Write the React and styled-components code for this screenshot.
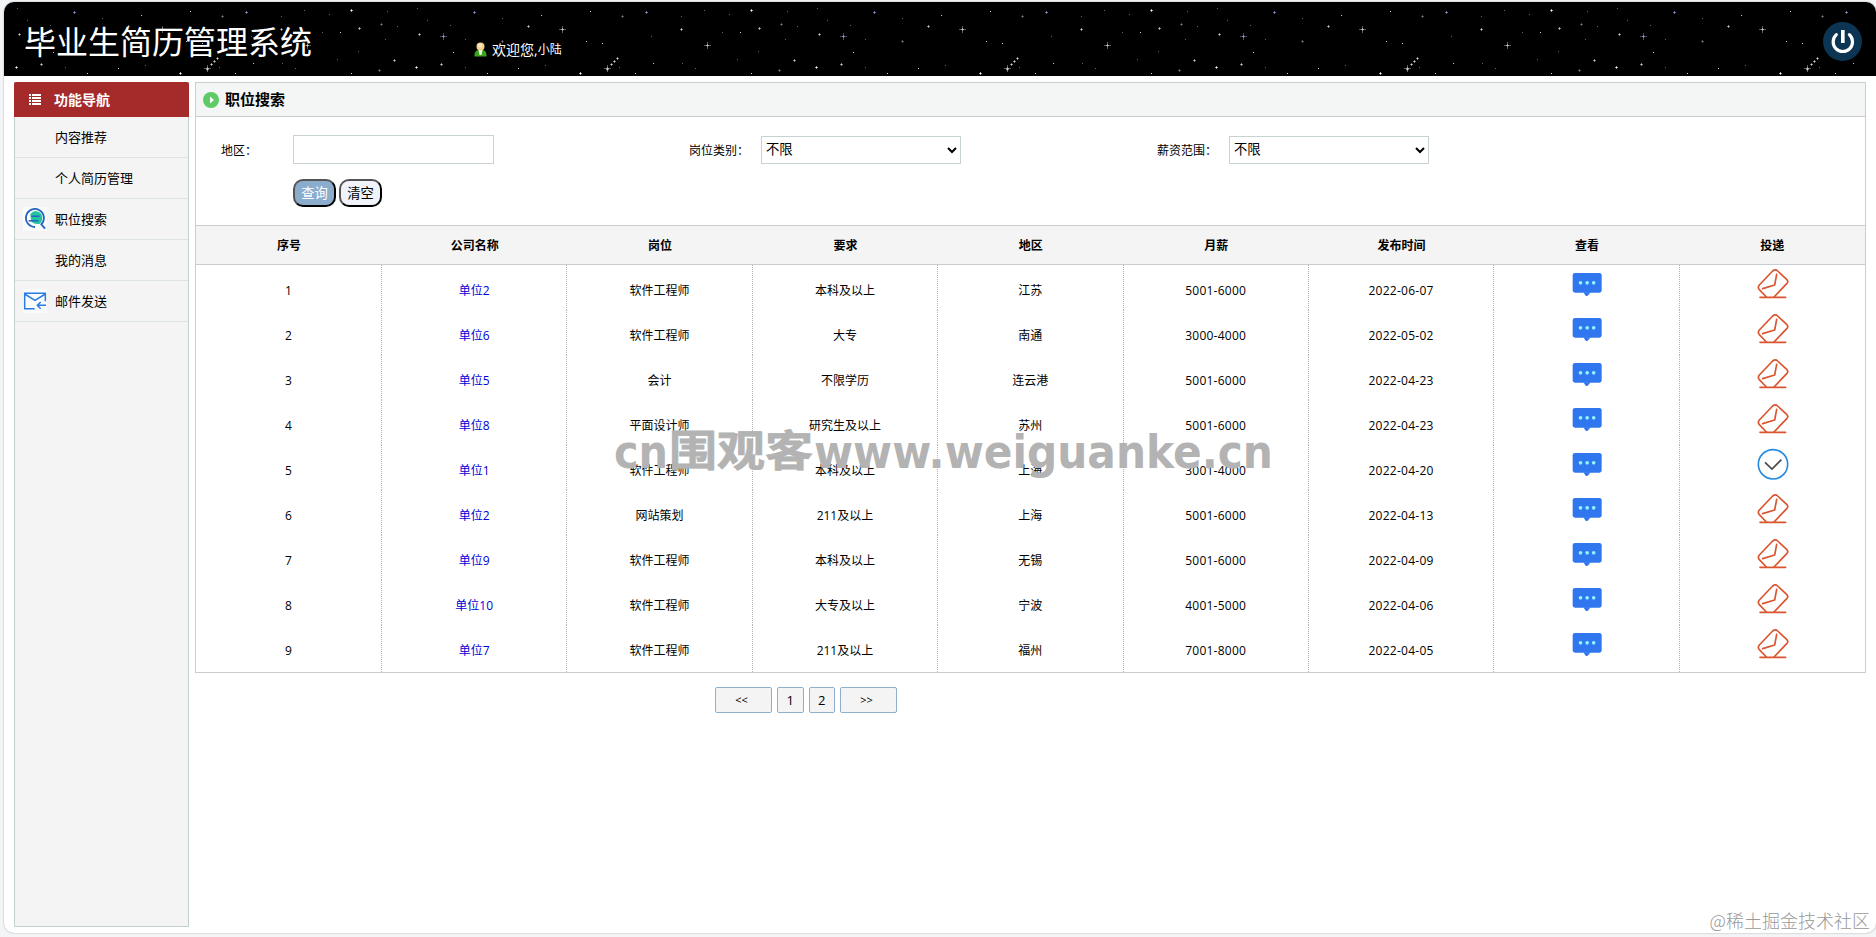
import React from 'react';
import styled, { createGlobalStyle, css } from 'styled-components';

const GlobalStyle = createGlobalStyle`
  * {
    box-sizing: border-box;
  }

  body {
    margin: 0;
    background: #f4f5f6;
    color: #000;
    font: 12px 'Open Sans', 'Noto Sans CJK SC', sans-serif;
    overflow: hidden;
  }
`;

const Page = styled.div`
  position: relative;
  width: 1876px;
  height: 937px;
  padding: 2px 0 0 4px;
  overflow: hidden;
`;

const Frame = styled.div`
  height: 931px;
  background: #fff;
  border-radius: 10px;
  box-shadow: 0 0 2px rgba(0, 0, 0, 0.35);
  overflow: hidden;
`;

const Header = styled.header`
  position: relative;
  display: flex;
  height: 74px;
  background: #000;
  color: #fff;
`;

const Sky = styled.svg`
  position: absolute;
  inset: 0;
  width: 100%;
  height: 100%;
`;

const SiteTitle = styled.h1`
  position: relative;
  width: 450px;
  margin: 0;
  padding: 17px 0 0 20px;
  font-size: 32px;
  line-height: 46px;
  font-weight: 400;
`;

const Welcome = styled.div`
  position: relative;
  display: flex;
  flex: 1;
  height: 24px;
  margin: 36px 0 0 20px;
  font-size: 14px;
  line-height: 24px;

  svg {
    margin: 4px 5px 0 0;
  }

  small {
    font-size: 12px;
  }
`;

const PowerButton = styled.a`
  position: relative;
  display: block;
  width: 39px;
  height: 39px;
  margin: 20px 14px 0 0;
`;

const Content = styled.div`
  display: flex;
  gap: 6px;
  padding: 6px 10px 0;
`;

const Sidebar = styled.aside`
  width: 175px;
  height: 845px;
  background: #f4f4f4;
  border: 1px solid #c2d0cf;
  border-top: 0;
`;

const SidebarTitle = styled.h2`
  display: flex;
  align-items: center;
  height: 35px;
  margin: 0 -1px;
  padding: 0 0 1px 15px;
  background: #a52a2a;
  border-radius: 2px 2px 0 0;
  color: #fff;
  font-size: 14px;
  gap: 13px;

  svg {
    margin-top: 2px;
  }
`;

const SidebarItem = styled.a`
  display: flex;
  align-items: center;
  height: 41px;
  padding: 0 0 2px 8px;
  border-bottom: 1px solid #dbe3e5;
  font-size: 13px;
`;

const ItemIcon = styled.span`
  width: 24px;
  height: 24px;
  margin: 2px 8px 0 0;
  background: ${(props) => (props.$filled ? '#f9fbfd' : 'none')};
`;

const Main = styled.main`
  flex: 1;
`;

const Panel = styled.section`
  border: 1px solid #c7cdd1;
`;

const PanelTitle = styled.h2`
  display: flex;
  align-items: center;
  height: 33px;
  margin: 0;
  padding: 0 0 2px 7px;
  gap: 6px;
  background: #f4f5f5;
  font-size: 15px;

  svg {
    margin-top: 3px;
  }
`;

const SearchForm = styled.form`
  height: 110px;
  padding: 18px 0 0 25px;
  border: solid #c7cdd1;
  border-width: 1px 0;
`;

const Fields = styled.div`
  display: grid;
  grid-template-columns: repeat(3, 468px);
  height: 29px;
`;

const Field = styled.label`
  display: flex;
  align-items: center;

  span {
    width: 72px;
  }
`;

const control = css`
  border: 1px solid #c8d2d3;
  background: #fff;
  color: #000;
  font: 13.33px 'Open Sans', 'Noto Sans CJK SC', sans-serif;
  outline: 0;
`;

const TextInput = styled.input`
  ${control}
  width: 201px;
  height: 29px;
`;

const Select = styled.select`
  ${control}
  width: 200px;
  height: 28px;
  margin-top: 1px;
  padding-bottom: 3px;
`;

const Buttons = styled.div`
  display: flex;
  gap: 3px;
  margin: 15px 0 0 72px;
`;

const FormButton = styled.button`
  width: 43px;
  height: 28px;
  padding: 0 0 1px;
  border: 2px outset #000;
  border-radius: 10px;
  background: ${(props) => (props.$primary ? '#8aadce' : '#f0f4fa')};
  color: ${(props) => (props.$primary ? '#fff' : '#000')};
  font: 13.33px 'Open Sans', 'Noto Sans CJK SC', sans-serif;
`;

const Row = styled.div`
  display: grid;
  grid-template-columns: 186px repeat(8, 1fr);
  height: 45px;
  text-align: center;

  &:last-child {
    height: 47px;
  }
`;

const HeadRow = styled(Row)`
  height: 39px;
  background: #f4f4f4;
  border-bottom: 1px solid #c7cdd1;
  font-weight: 700;
  line-height: 39px;
`;

const Cell = styled.div`
  padding: ${(props) => (props.$icon ? '3px 0 0 1px' : '16px 0 0')};
  line-height: 20px;
  letter-spacing: ${(props) => (props.$number ? '0.25px' : 'normal')};

  &:not(:last-child) {
    border-right: 1px dotted #b5b5b5;
  }
`;

const CompanyLink = styled.a`
  color: #0000d6;
`;

const Pager = styled.nav`
  display: flex;
  gap: 5px;
  margin: 14px 0 0 520px;
`;

const PageButton = styled.a`
  width: ${(props) => (props.$wide ? 57 : 26.500)}px;
  height: 26px;
  padding-right: ${(props) => (props.$wide ? 4 : 0)}px;
  border: 1px solid #8eb0cf;
  border-radius: 2px;
  background: #f4f4f4;
  text-align: center;
  line-height: 24px;
  font-size: ${(props) => (props.$wide ? 11 : 13)}px;
`;

const CenterMark = styled.svg`
  position: absolute;
  left: 600px;
  top: 420px;
  pointer-events: none;
`;

const CornerMark = styled.div`
  position: absolute;
  right: 6px;
  bottom: 4px;
  color: #999;
  font: 300 18px/26px 'Noto Sans CJK SC', sans-serif;
  text-shadow: 0 0 1px #fff;
`;

// x, y, size, colour; one tile is 400px wide
const STARS = [
  [17, 8, 0], [27, 20, 0], [50, 25, 0], [74, 12, 2, 'p'], [102, 18, 0], [141, 15, 1],
  [128, 26, 2], [162, 29, 3], [190, 11, 1], [222, 16, 2, 'g'], [246, 12, 2, 'p'], [281, 16, 0],
  [281, 29, 2], [304, 10, 0], [329, 14, 0], [351, 10, 2, 'w'], [387, 11, 0], [19, 34, 2],
  [43, 36, 3, 'p'], [65, 39, 0], [53, 52, 1], [16, 67, 2, 'w'], [41, 64, 2], [65, 67, 0],
  [87, 73, 1], [118, 68, 1], [145, 65, 0], [180, 73, 2, 'w'], [186, 41, 1], [202, 43, 1],
  [251, 36, 0], [307, 45, 3], [322, 32, 0], [340, 32, 1], [359, 28, 2], [381, 24, 2, 'g'],
  [397, 26, 0], [385, 39, 0], [358, 51, 0], [337, 59, 0], [394, 60, 2], [379, 70, 2, 'g'],
  [351, 73, 1], [295, 68, 0], [282, 63, 0], [253, 63, 1], [235, 73, 1], [219, 67, 0],
  [102, 41, 2, 'g'], [207, 68, 3], [207, 69, 2], [211, 64, 2], [214, 61, 2], [217, 58, 2],
];

const STAR_COLORS = { p: '#9d9be0', g: '#777', w: '#fff' };

const Star = ({ x, y, size, tone }) => {
  const color = STAR_COLORS[tone] || (size === 0 ? '#666' : '#ccc');
  return (
    <g fill={color}>
      <rect x={x} y={y - 2} width="1" height="1" />
      {size > 1 && (
        <g opacity="0.6">
          <rect x={x - 1} y={y - 2} width="3" height="1" />
          <rect x={x} y={y - 3} width="1" height="3" />
        </g>
      )}
      {size > 2 && (
        <g opacity="0.45">
          <rect x={x - 3} y={y - 2} width="7" height="1" />
          <rect x={x} y={y - 5} width="1" height="7" />
        </g>
      )}
    </g>
  );
};

const NightSky = () => (
  <Sky>
    <defs>
      <pattern id="stars" x="-4" y="0" width="400" height="80" patternUnits="userSpaceOnUse">
        {STARS.map(([x, y, size, tone]) => (
          <Star key={`${x}-${y}`} x={x} y={y} size={size} tone={tone} />
        ))}
      </pattern>
    </defs>
    <rect width="100%" height="100%" fill="url(#stars)" />
  </Sky>
);

const UserIcon = () => (
  <svg width="13" height="15" viewBox="0 0 13 15">
    <path d="M.5 14.5Q0 9 4 8h5q4 1 3.500 6.500z" fill="#38a51c" />
    <path d="M4.500 8h4L7.500 13h-2z" fill="#e9f7df" />
    <circle cx="6.500" cy="4.500" r="4" fill="#f6cf8e" />
    <circle cx="6" cy="3.500" r="2" fill="#fdebc8" />
  </svg>
);

const PowerIcon = () => (
  <svg width="39" height="39" viewBox="0 0 117 117">
    <circle cx="58.500" cy="58.500" r="58.500" fill="#0b3553" />
    <path d="M40 38a29 29 0 1 0 39 0" fill="none" stroke="#fff" strokeWidth="9.500" strokeLinecap="round" />
    <path d="M54 24h11v39h-11z" fill="#fff" />
  </svg>
);

const ListIcon = () => (
  <svg width="12" height="12" viewBox="0 0 12 12" fill="#fff">
    {[0, 3, 6, 9].map((y) => (
      <React.Fragment key={y}>
        <rect x="0" y={y} width="2" height="2" />
        <rect x="3" y={y} width="9" height="2" />
      </React.Fragment>
    ))}
  </svg>
);

const PlayIcon = () => (
  <svg width="16" height="16" viewBox="0 0 16 16">
    <circle cx="8" cy="8" r="8" fill="#5fcb65" />
    <path d="M7 4.500 11 8l-4 3.500z" fill="#fff" />
  </svg>
);

const SearchIcon = () => (
  <svg width="24" height="24" viewBox="0 0 72 72" fill="none" stroke="#2463c0" strokeWidth="5.500">
    <path d="M22 22Q27 13 37 12q20 2 21 20 0 12-7 18-16 3-26-6z" fill="#23c3a0" stroke="none" />
    <path d="M36 60a27 27 0 1 1 19-8L66 65" />
    <path d="M25 28h25M17 41h29" strokeWidth="4.500" />
  </svg>
);

const MailIcon = () => (
  <svg width="24" height="24" viewBox="0 0 72 72" fill="none" stroke="#2a7ce0" strokeWidth="4.500">
    <path d="M35 59H5V13h62v24M5 15l31 19 31-19" />
    <path d="M69 49H43M53 39 43 49l10 10" />
  </svg>
);

const ChatIcon = () => (
  <svg width="32" height="32" viewBox="0 0 96 96">
    <rect x="5" y="15" width="87" height="59" rx="7" fill="#3077ef" />
    <path d="M37 73h22L50 83q-3 2-6 0z" fill="#3077ef" />
    <g fill="#8ff6ff">
      <circle cx="28.500" cy="44.500" r="5.500" />
      <circle cx="48.500" cy="44.500" r="5.500" />
      <circle cx="68" cy="44.500" r="5.500" />
    </g>
  </svg>
);

const DeliverIcon = () => (
  <svg width="32" height="32" viewBox="0 0 96 96" fill="none" stroke="#d9552f" strokeWidth="5" strokeLinecap="round" strokeLinejoin="round">
    <path d="M28 87 7 65q-6-7 0-14L47 9q8-7 15 0l27 25q6 6 1 12L51 87" />
    <path d="M9 88h77M59 19l-6 32-36 11" />
  </svg>
);

const SentIcon = () => (
  <svg width="32" height="32" viewBox="0 0 96 96" fill="none">
    <circle cx="48" cy="49" r="44" stroke="#268be0" strokeWidth="5" />
    <path d="m24 43 21 20 28-28" stroke="#4a4a4a" strokeWidth="5" />
  </svg>
);

const MENU = [
  { name: '内容推荐' },
  { name: '个人简历管理' },
  { name: '职位搜索', icon: <SearchIcon />, filled: true },
  { name: '我的消息' },
  { name: '邮件发送', icon: <MailIcon />, filled: true },
];

const COLUMNS = ['序号', '公司名称', '岗位', '要求', '地区', '月薪', '发布时间', '查看', '投递'];

const JOBS = [
  ['单位2', '软件工程师', '本科及以上', '江苏', '5001-6000', '2022-06-07'],
  ['单位6', '软件工程师', '大专', '南通', '3000-4000', '2022-05-02'],
  ['单位5', '会计', '不限学历', '连云港', '5001-6000', '2022-04-23'],
  ['单位8', '平面设计师', '研究生及以上', '苏州', '5001-6000', '2022-04-23'],
  ['单位1', '软件工程师', '本科及以上', '上海', '3001-4000', '2022-04-20', true],
  ['单位2', '网站策划', '211及以上', '上海', '5001-6000', '2022-04-13'],
  ['单位9', '软件工程师', '本科及以上', '无锡', '5001-6000', '2022-04-09'],
  ['单位10', '软件工程师', '大专及以上', '宁波', '4001-5000', '2022-04-06'],
  ['单位7', '软件工程师', '211及以上', '福州', '7001-8000', '2022-04-05'],
];

const App = () => {
  return (
    <>
      <GlobalStyle />
      <Page>
        <Frame>
          <Header>
            <NightSky />
            <SiteTitle>毕业生简历管理系统</SiteTitle>
            <Welcome>
              <UserIcon />
              欢迎您,<small>小陆</small>
            </Welcome>
            <PowerButton><PowerIcon /></PowerButton>
          </Header>
          <Content>
            <Sidebar>
              <SidebarTitle><ListIcon />功能导航</SidebarTitle>
              {MENU.map((item) => (
                <SidebarItem key={item.name}>
                  <ItemIcon $filled={item.filled}>{item.icon}</ItemIcon>
                  {item.name}
                </SidebarItem>
              ))}
            </Sidebar>
            <Main>
              <Panel>
                <PanelTitle><PlayIcon />职位搜索</PanelTitle>
                <SearchForm>
                  <Fields>
                    <Field>
                      <span>地区：</span>
                      <TextInput />
                    </Field>
                    <Field>
                      <span>岗位类别：</span>
                      <Select><option>不限</option></Select>
                    </Field>
                    <Field>
                      <span>薪资范围：</span>
                      <Select><option>不限</option></Select>
                    </Field>
                  </Fields>
                  <Buttons>
                    <FormButton type="button" $primary>查询</FormButton>
                    <FormButton type="reset">清空</FormButton>
                  </Buttons>
                </SearchForm>
                <HeadRow>
                  {COLUMNS.map((name) => (
                    <span key={name}>{name}</span>
                  ))}
                </HeadRow>
                {JOBS.map(([company, post, degree, area, salary, date, sent], index) => (
                  <Row key={index}>
                    <Cell>{index + 1}</Cell>
                    <Cell><CompanyLink>{company}</CompanyLink></Cell>
                    <Cell>{post}</Cell>
                    <Cell>{degree}</Cell>
                    <Cell>{area}</Cell>
                    <Cell $number>{salary}</Cell>
                    <Cell $number>{date}</Cell>
                    <Cell $icon><ChatIcon /></Cell>
                    <Cell $icon>{sent ? <SentIcon /> : <DeliverIcon />}</Cell>
                  </Row>
                ))}
              </Panel>
              <Pager>
                <PageButton $wide>&lt;&lt;</PageButton>
                <PageButton>1</PageButton>
                <PageButton>2</PageButton>
                <PageButton $wide>&gt;&gt;</PageButton>
              </Pager>
            </Main>
          </Content>
        </Frame>
        <CenterMark width="690" height="64" fill="#b3b3b3" fontFamily="'DejaVu Sans', 'Noto Sans CJK SC', sans-serif" fontWeight="700" fontSize="46">
          <text x="14" y="48" textLength="54" lengthAdjust="spacingAndGlyphs">cn</text>
          <text x="69" y="46" textLength="144" lengthAdjust="spacingAndGlyphs" fontSize="42" stroke="#b3b3b3" strokeWidth="0.8">围观客</text>
          <text x="214" y="48" textLength="459" lengthAdjust="spacingAndGlyphs">www.weiguanke.cn</text>
        </CenterMark>
        <CornerMark>@稀土掘金技术社区</CornerMark>
      </Page>
    </>
  );
};

export default App;
